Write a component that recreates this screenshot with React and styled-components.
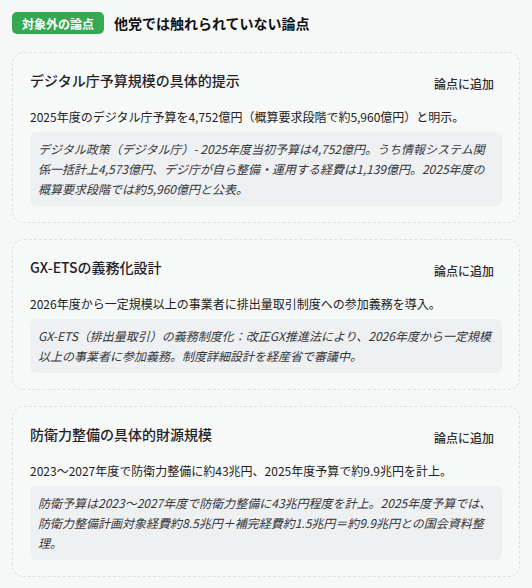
import React from "react";
import styled, { createGlobalStyle } from "styled-components";

const Global = createGlobalStyle`
  html, body { margin: 0; padding: 0; background: #f6f7f7; }
  body { font-family: "Noto Sans CJK JP", "Noto Sans", sans-serif; color: #1f2328; }
`;

const Page = styled.div`
  padding: 12px;
  display: flex;
  flex-direction: column;
  gap: 18px;
`;

const Header = styled.div`
  display: flex;
  align-items: center;
  gap: 10px;
`;

const Badge = styled.span`
  display: inline-flex;
  align-items: center;
  height: 22px;
  padding: 0 10px;
  border-radius: 5px;
  background: #35a853;
  color: #fff;
  font-size: 12px;
  font-weight: 700;
`;

const HeaderTitle = styled.h2`
  margin: 0;
  font-size: 14px;
  font-weight: 700;
  color: #111;
`;

const List = styled.div`
  display: flex;
  flex-direction: column;
  gap: 16px;
`;

const Card = styled.div`
  border: 1px dashed #dde0e3;
  border-radius: 12px;
  background: #f7f8f8;
  padding: 16px 17px;
`;

const CardHead = styled.div`
  display: flex;
  justify-content: space-between;
  align-items: flex-start;
`;

const CardTitle = styled.h3`
  margin: 0;
  font-size: 14px;
  line-height: 22px;
  font-weight: 500;
  color: #1f2328;
`;

const AddButton = styled.button`
  border: none;
  background: transparent;
  font-family: inherit;
  font-size: 12px;
  font-weight: 500;
  color: #2b2f33;
  padding: 7px 8px 7px 7px;
  line-height: 16px;
  cursor: pointer;
`;

const Summary = styled.p`
  margin: 8px 0 5px;
  font-size: 12px;
  line-height: 20px;
  color: #222;
`;

const Quote = styled.div`
  background: #eff0f2;
  border-radius: 6px;
  padding: 7px 8px;
  font-size: 12px;
  line-height: 20px;
  font-style: italic;
  color: #33373c;
`;

const items = [
  {
    title: "デジタル庁予算規模の具体的提示",
    summary: "2025年度のデジタル庁予算を4,752億円（概算要求段階で約5,960億円）と明示。",
    quote:
      "デジタル政策（デジタル庁）- 2025年度当初予算は4,752億円。うち情報システム関係一括計上4,573億円、デジ庁が自ら整備・運用する経費は1,139億円。2025年度の概算要求段階では約5,960億円と公表。",
  },
  {
    title: "GX-ETSの義務化設計",
    summary: "2026年度から一定規模以上の事業者に排出量取引制度への参加義務を導入。",
    quote:
      "GX-ETS（排出量取引）の義務制度化：改正GX推進法により、2026年度から一定規模以上の事業者に参加義務。制度詳細設計を経産省で審議中。",
  },
  {
    title: "防衛力整備の具体的財源規模",
    summary: "2023〜2027年度で防衛力整備に約43兆円、2025年度予算で約9.9兆円を計上。",
    quote:
      "防衛予算は2023〜2027年度で防衛力整備に43兆円程度を計上。2025年度予算では、防衛力整備計画対象経費約8.5兆円＋補完経費約1.5兆円＝約9.9兆円との国会資料整理。",
  },
];

export default function App() {
  return (
    <>
      <Global />
      <Page>
        <Header>
          <Badge>対象外の論点</Badge>
          <HeaderTitle>他党では触れられていない論点</HeaderTitle>
        </Header>
        <List>
          {items.map((it) => (
            <Card key={it.title}>
              <CardHead>
                <CardTitle>{it.title}</CardTitle>
                <AddButton>論点に追加</AddButton>
              </CardHead>
              <Summary>{it.summary}</Summary>
              <Quote>{it.quote}</Quote>
            </Card>
          ))}
        </List>
      </Page>
    </>
  );
}
